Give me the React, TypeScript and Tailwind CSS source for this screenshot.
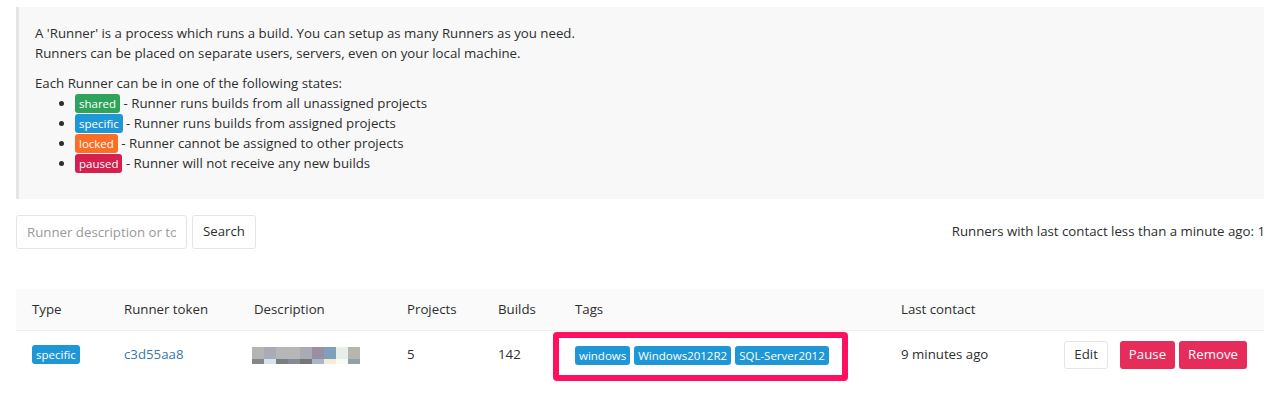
import React from "react";

const states = [
  { label: "shared", cls: "bg-[#2fa35b]", text: "Runner runs builds from all unassigned projects" },
  { label: "specific", cls: "bg-[#1f97d6]", text: "Runner runs builds from assigned projects" },
  { label: "locked", cls: "bg-[#fc6d26]", text: "Runner cannot be assigned to other projects" },
  { label: "paused", cls: "bg-[#d5204f]", text: "Runner will not receive any new builds" },
];

// blurred description, two rows of swatches
const blurTop = ["#b4b4b4", "#a9acb7", "#b5b6b7", "#b7b7b7", "#a9abb3", "#9a8ea0", "#7f9fba", "#e8efe9", "#b6b5ae"];
const blurBottom = ["#84868a", "#d5e3f0", "#7b7d80", "#848b94", "#767677", "#aab6c8", "#f6ebd7", "#f8faf8", "#93a0ac"];

function Badge({ label, cls }: { label: string; cls: string }) {
  return (
    <span className={`inline-block rounded-[3px] px-[4px] text-[11.5px] leading-[19px] text-white ${cls}`}>
      {label}
    </span>
  );
}

export default function App() {
  return (
    <div className="min-h-[401px] bg-white px-4 pt-[7px] font-['Open_Sans',sans-serif] text-[13.25px] text-[#2e2e2e]">
      <div className="h-[192px] border-l-[3px] border-[#e5e5e5] bg-[#f8f8f8] pl-4 pt-[16px]">
        <p className="leading-[20px]">
          A 'Runner' is a process which runs a build. You can setup as many Runners as you need.
          <br />
          Runners can be placed on separate users, servers, even on your local machine.
        </p>
        <p className="mt-[10px] leading-[20px]">Each Runner can be in one of the following states:</p>
        <ul className="list-disc pl-[40px]">
          {states.map((s) => (
            <li key={s.label} className="leading-[20px]">
              <Badge label={s.label} cls={s.cls} /> - {s.text}
            </li>
          ))}
        </ul>
      </div>

      <div className="mt-4 flex items-center justify-between">
        <div className="flex gap-[5px]">
          <input
            className="h-[34px] w-[171px] rounded-[3px] border border-[#e5e5e5] px-[10px] text-[13.25px] placeholder:text-[#999]"
            placeholder="Runner description or token"
          />
          <button className="h-[34px] rounded-[3px] border border-[#e5e5e5] bg-white px-[10px]">
            Search
          </button>
        </div>
        <div className="-mr-[1px]">Runners with last contact less than a minute ago: 1</div>
      </div>

      <table className="mt-[40px] w-full border-collapse text-left">
        <thead>
          <tr className="h-[41px] border-b border-[#f0f0f0] bg-[#fafafa]">
            <th className="w-[108px] pl-4 pt-[1px] font-normal">Type</th>
            <th className="w-[130px] pt-[1px] font-normal">Runner token</th>
            <th className="w-[153px] pt-[1px] font-normal">Description</th>
            <th className="w-[91px] pt-[1px] font-normal">Projects</th>
            <th className="w-[77px] pt-[1px] font-normal">Builds</th>
            <th className="w-[326px] pt-[1px] font-normal">Tags</th>
            <th className="pt-[1px] font-normal">Last contact</th>
            <th />
          </tr>
        </thead>
        <tbody>
          <tr className="h-[50px]">
            <td className="pl-4">
              <Badge label="specific" cls="bg-[#1f97d6]" />
            </td>
            <td className="text-[#3777b0]">c3d55aa8</td>
            <td>
              <div className="-ml-[2px] flex flex-col">
                <div className="flex">
                  {blurTop.map((c, i) => (
                    <div key={i} className="h-[12px] w-[12px]" style={{ background: c }} />
                  ))}
                </div>
                <div className="flex">
                  {blurBottom.map((c, i) => (
                    <div key={i} className="h-[5px] w-[12px]" style={{ background: c }} />
                  ))}
                </div>
              </div>
            </td>
            <td>5</td>
            <td>142</td>
            <td className="relative">
              <div className="flex gap-[4px]">
                {["windows", "Windows2012R2", "SQL-Server2012"].map((t) => (
                  <Badge key={t} label={t} cls="bg-[#1f97d6]" />
                ))}
              </div>
              <div className="pointer-events-none absolute left-[-22px] top-[1px] h-[49px] w-[295px] rounded-[4px] border-[6px] border-[#ff1060]" />
            </td>
            <td>9 minutes ago</td>
            <td className="pr-[17px]">
              <div className="flex justify-end gap-[4px]">
                <button className="mr-[8px] h-[28px] rounded-[3px] border border-[#e5e5e5] bg-white px-[9px]">Edit</button>
                <button className="h-[28px] rounded-[3px] bg-[#e52c5a] px-[9px] text-white">Pause</button>
                <button className="h-[28px] rounded-[3px] bg-[#e52c5a] px-[9px] text-white">Remove</button>
              </div>
            </td>
          </tr>
        </tbody>
      </table>
    </div>
  );
}
